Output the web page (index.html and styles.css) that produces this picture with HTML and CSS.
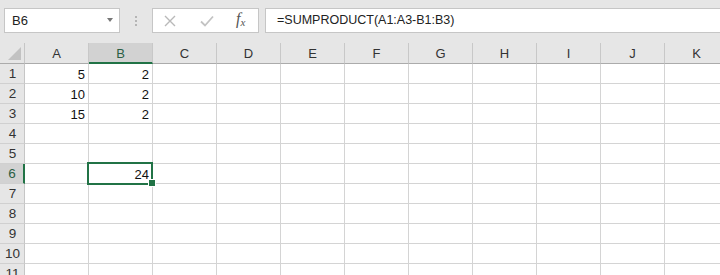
FILE: index.html
```html
<!DOCTYPE html>
<html>
<head>
<meta charset="utf-8">
<link rel="stylesheet" href="styles.css">
</head>
<body>
<div class="toolbar">
  <div class="namebox"><span class="name">B6</span><span class="caret"></span></div>
  <div class="grip"><i></i><i></i><i></i></div>
  <div class="fnbox">
    <svg class="ic-x" width="12" height="12" viewBox="0 0 12 12"><path d="M1 1L11 11M11 1L1 11" stroke="#b9b9b9" stroke-width="1.4" fill="none"/></svg>
    <svg class="ic-ok" width="14" height="12" viewBox="0 0 14 12"><path d="M1 6.5L5 10.5L13 1.5" stroke="#c3c3c3" stroke-width="1.8" fill="none"/></svg>
    <span class="fx">f<sub>x</sub></span>
  </div>
  <div class="formula">=SUMPRODUCT(A1:A3-B1:B3)</div>
</div>
<div class="sheet">
  <div class="corner"><span class="tri"></span></div>
  <div class="ch">A</div><div class="ch sel">B</div><div class="ch">C</div><div class="ch">D</div><div class="ch">E</div><div class="ch">F</div><div class="ch">G</div><div class="ch">H</div><div class="ch">I</div><div class="ch">J</div><div class="ch">K</div>

  <div class="rh">1</div><div class="c">5</div><div class="c">2</div><div class="c"></div><div class="c"></div><div class="c"></div><div class="c"></div><div class="c"></div><div class="c"></div><div class="c"></div><div class="c"></div><div class="c"></div>
  <div class="rh">2</div><div class="c">10</div><div class="c">2</div><div class="c"></div><div class="c"></div><div class="c"></div><div class="c"></div><div class="c"></div><div class="c"></div><div class="c"></div><div class="c"></div><div class="c"></div>
  <div class="rh">3</div><div class="c">15</div><div class="c">2</div><div class="c"></div><div class="c"></div><div class="c"></div><div class="c"></div><div class="c"></div><div class="c"></div><div class="c"></div><div class="c"></div><div class="c"></div>
  <div class="rh">4</div><div class="c"></div><div class="c"></div><div class="c"></div><div class="c"></div><div class="c"></div><div class="c"></div><div class="c"></div><div class="c"></div><div class="c"></div><div class="c"></div><div class="c"></div>
  <div class="rh">5</div><div class="c"></div><div class="c"></div><div class="c"></div><div class="c"></div><div class="c"></div><div class="c"></div><div class="c"></div><div class="c"></div><div class="c"></div><div class="c"></div><div class="c"></div>
  <div class="rh sel">6</div><div class="c"></div><div class="c active">24<span class="frame"></span><span class="handle"></span></div><div class="c"></div><div class="c"></div><div class="c"></div><div class="c"></div><div class="c"></div><div class="c"></div><div class="c"></div><div class="c"></div><div class="c"></div>
  <div class="rh">7</div><div class="c"></div><div class="c"></div><div class="c"></div><div class="c"></div><div class="c"></div><div class="c"></div><div class="c"></div><div class="c"></div><div class="c"></div><div class="c"></div><div class="c"></div>
  <div class="rh">8</div><div class="c"></div><div class="c"></div><div class="c"></div><div class="c"></div><div class="c"></div><div class="c"></div><div class="c"></div><div class="c"></div><div class="c"></div><div class="c"></div><div class="c"></div>
  <div class="rh">9</div><div class="c"></div><div class="c"></div><div class="c"></div><div class="c"></div><div class="c"></div><div class="c"></div><div class="c"></div><div class="c"></div><div class="c"></div><div class="c"></div><div class="c"></div>
  <div class="rh">10</div><div class="c"></div><div class="c"></div><div class="c"></div><div class="c"></div><div class="c"></div><div class="c"></div><div class="c"></div><div class="c"></div><div class="c"></div><div class="c"></div><div class="c"></div>
  <div class="rh">11</div><div class="c"></div><div class="c"></div><div class="c"></div><div class="c"></div><div class="c"></div><div class="c"></div><div class="c"></div><div class="c"></div><div class="c"></div><div class="c"></div><div class="c"></div>
</div>
</body>
</html>
```

FILE: styles.css
```css
* { box-sizing: border-box; }
html, body {
  margin: 0;
  padding: 0;
  width: 720px;
  height: 275px;
  overflow: hidden;
  background: #e6e6e6;
  font-family: "Liberation Sans", Arial, sans-serif;
}
.toolbar {
  display: flex;
  align-items: flex-start;
  height: 43px;
  padding: 8px 0 0 4px;
  background: #e6e6e6;
}
.namebox {
  width: 116px;
  height: 25px;
  background: #fff;
  border: 1px solid #c6c6c6;
  display: flex;
  align-items: center;
  justify-content: space-between;
  padding: 0 6px 0 7px;
  font-size: 13px;
  color: #222;
}
.caret {
  width: 0;
  height: 0;
  border-left: 3.5px solid transparent;
  border-right: 3.5px solid transparent;
  border-top: 4px solid #777;
  margin-top: -2px;
}
.grip {
  width: 32px;
  height: 25px;
  display: flex;
  flex-direction: column;
  align-items: center;
  justify-content: center;
  gap: 2px;
}
.grip i {
  width: 2px;
  height: 2px;
  background: #b5b5b5;
  display: block;
}
.fnbox {
  width: 107px;
  height: 25px;
  background: #fff;
  border: 1px solid #c6c6c6;
  display: flex;
  align-items: center;
  padding-left: 11px;
}
.ic-x { margin-right: 24px; }
.ic-ok { margin-right: 22px; }
.fx {
  font-family: "Liberation Serif", serif;
  font-style: italic;
  font-size: 16px;
  color: #555;
  margin-top: -3px;
}
.fx sub {
  font-size: 11px;
  vertical-align: -2px;
}
.formula {
  flex: 1;
  margin-left: 6px;
  margin-right: -4px;
  height: 25px;
  background: #fff;
  border: 1px solid #c6c6c6;
  font-size: 12.5px;
  color: #222;
  padding: 4px 0 0 11px;
}
.sheet {
  display: grid;
  grid-template-columns: 25px repeat(11, 64px);
  grid-template-rows: 21px repeat(11, 20px);
  background: #fff;
  width: 729px;
}
.corner {
  background: #e6e6e6;
  border-right: 1px solid #c6c6c6;
  border-bottom: 1px solid #ababab;
  position: relative;
}
.tri {
  position: absolute;
  right: 3px;
  bottom: 3px;
  width: 0;
  height: 0;
  border-left: 13px solid transparent;
  border-bottom: 13px solid #c2c2c2;
}
.ch {
  background: #e6e6e6;
  border-right: 1px solid #c8c8c8;
  border-bottom: 1px solid #ababab;
  font-size: 13px;
  color: #333;
  display: flex;
  align-items: center;
  justify-content: center;
  padding-top: 1px;
}
.ch.sel {
  background: #d2d2d2;
  border-bottom: 2px solid #217346;
  color: #2b5f45;
}
.rh {
  background: #e6e6e6;
  border-right: 1px solid #c6c6c6;
  border-bottom: 1px solid #d0d0d0;
  font-size: 13.5px;
  color: #333;
  display: flex;
  align-items: center;
  justify-content: center;
  padding-left: 1px;
}
.rh.sel {
  background: #d2d2d2;
  border-right: 2px solid #217346;
  color: #2b5f45;
}
.c {
  border-right: 1px solid #d4d4d4;
  border-bottom: 1px solid #d4d4d4;
  font-size: 13px;
  color: #111;
  text-align: right;
  padding: 3px 3px 0 0;
}
.active {
  position: relative;
}
.frame {
  position: absolute;
  left: -2px;
  top: -2px;
  width: 66px;
  height: 23px;
  border: 2px solid #217346;
}
.handle {
  position: absolute;
  right: -3px;
  bottom: -3px;
  width: 6px;
  height: 6px;
  background: #217346;
  outline: 1px solid #fff;
}
```
